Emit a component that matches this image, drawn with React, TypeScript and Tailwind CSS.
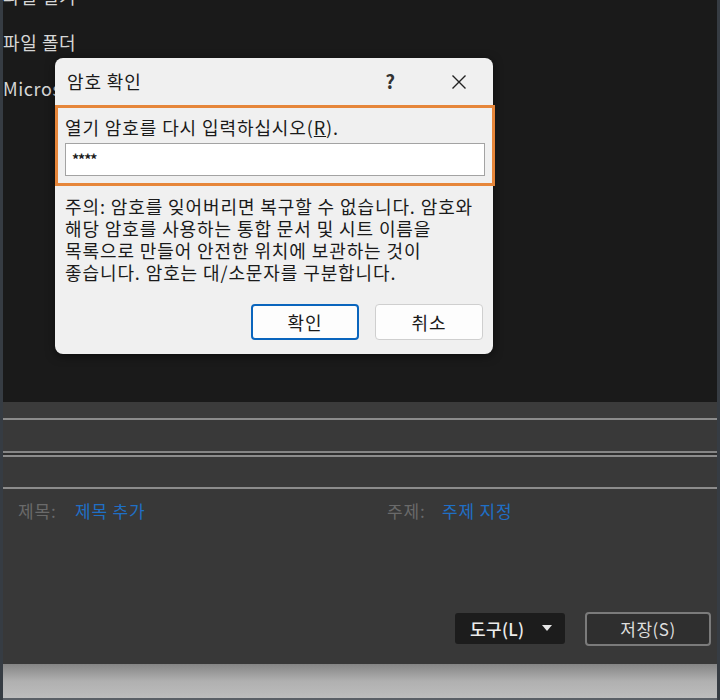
import React from "react";

export default function App() {
  return (
    <div className="relative w-[720px] h-[700px] overflow-hidden bg-[#1a1a1a] border-x-[3px] border-[#363c43] font-['Noto_Sans_CJK_KR',sans-serif]">
      {/* top dark file list */}
      <div className="h-[402px] bg-[#1a1a1a] overflow-hidden">
        <div className="-mt-[27px] flex flex-col text-[18px] tracking-[0.6px] text-[#d6d6d6]">
          <div className="h-[46px] flex items-center whitespace-nowrap">파일 열기</div>
          <div className="h-[46px] flex items-center whitespace-nowrap">파일 폴더</div>
          <div className="h-[46px] flex items-center whitespace-nowrap">Microsoft Excel 통합 문서</div>
        </div>
      </div>

      {/* lower panel */}
      <div className="h-[262px] flex flex-col bg-[#383838]">
        <div className="h-[16px] bg-[#3b3b3b]" />
        <div className="h-[2px] bg-[#8c8c8c]" />
        <div className="h-[31px] bg-[#393939]" />
        <div className="h-[2px] bg-[#858585]" />
        <div className="h-[2px] bg-[#2e2e2e]" />
        <div className="h-[2px] bg-[#8c8c8c]" />
        <div className="h-[30px] bg-[#393939]" />
        <div className="h-[2px] bg-[#8c8c8c]" />
        <div className="flex items-center h-[44px] text-[17px] tracking-[0.8px] pl-[15px]">
          <div className="w-[369px] flex items-center">
            <span className="text-[#6a6a6a] w-[57px]">제목:</span>
            <span className="text-[#1f6fc6]">제목 추가</span>
          </div>
          <div className="flex items-center">
            <span className="text-[#6a6a6a] w-[55px]">주제:</span>
            <span className="text-[#1f6fc6]">주제 지정</span>
          </div>
        </div>
        <div className="flex-1 flex items-end justify-end pr-[6px] pb-[18px] gap-[20px]">
          <div className="w-[110px] h-[31px] mb-[2px] rounded-[3px] bg-[#1c1c1c] flex items-center pl-[15px] pr-[13px] text-[17px] tracking-[0.3px] text-[#ececec]">
            <span className="font-medium">도구(L)</span>
            <svg width="10" height="7" viewBox="0 0 10 7" className="ml-auto">
              <path d="M0 0 L10 0 L5 6 Z" fill="#e6e6e6" />
            </svg>
          </div>
          <div className="w-[126px] h-[34px] rounded-[4px] border-2 border-[#7b7b7b] bg-[#2f2f2f] flex items-center justify-center text-[17px] tracking-[0.5px] text-[#dedede]">
            저장(S)
          </div>
        </div>
      </div>

      {/* bottom strip */}
      <div className="h-[36px] bg-gradient-to-b from-[#858585] via-[#b0b0b0] to-[#bdbdbd] border-b-[2px] border-[#5a5f66]" />

      {/* dialog */}
      <div className="absolute left-[52px] top-[58px] w-[438px] h-[296px] bg-[#f0f0f0] rounded-[8px] shadow-[0_2px_10px_rgba(0,0,0,0.5)] flex flex-col text-[#1a1a1a] tracking-[0.9px]">
        <div className="h-[47px] flex items-center pl-[12px] pr-[26px] text-[18px]">
          <span>암호 확인</span>
          <span className="ml-auto mr-[55px] text-[19px] font-semibold text-[#333]">?</span>
          <svg width="16" height="16" viewBox="0 0 16 16" className="text-[#222]">
            <path d="M1.5 1.5 L14.5 14.5 M14.5 1.5 L1.5 14.5" stroke="currentColor" strokeWidth="1.4" fill="none" />
          </svg>
        </div>
        <div className="w-[440px] border-[3px] border-[#e6863a] pt-[9px] pl-[7px] pr-[7px] pb-[7px] flex flex-col gap-[6px]">
          <div className="text-[18px] leading-[20px] whitespace-nowrap">
            열기 암호를 다시 입력하십시오(<span className="underline">R</span>).
          </div>
          <div className="h-[33px] bg-white border border-[#a3a3a3] flex items-center pl-[6px] text-[14px] font-bold tracking-[-1px]">
            ****
          </div>
        </div>
        <div className="mt-[9px] pl-[10px] text-[18px] leading-[22px] whitespace-nowrap">
          <div>주의: 암호를 잊어버리면 복구할 수 없습니다. 암호와</div>
          <div>해당 암호를 사용하는 통합 문서 및 시트 이름을</div>
          <div>목록으로 만들어 안전한 위치에 보관하는 것이</div>
          <div>좋습니다. 암호는 대/소문자를 구분합니다.</div>
        </div>
        <div className="mt-auto mb-[14px] flex justify-end gap-[16px] pr-[10px]">
          <div className="w-[108px] h-[36px] rounded-[4px] border-2 border-[#0a65bd] bg-[#fdfdfd] flex items-center justify-center text-[18px]">
            확인
          </div>
          <div className="w-[108px] h-[36px] rounded-[4px] border border-[#cfcfcf] bg-[#fdfdfd] flex items-center justify-center text-[18px]">
            취소
          </div>
        </div>
      </div>
    </div>
  );
}
